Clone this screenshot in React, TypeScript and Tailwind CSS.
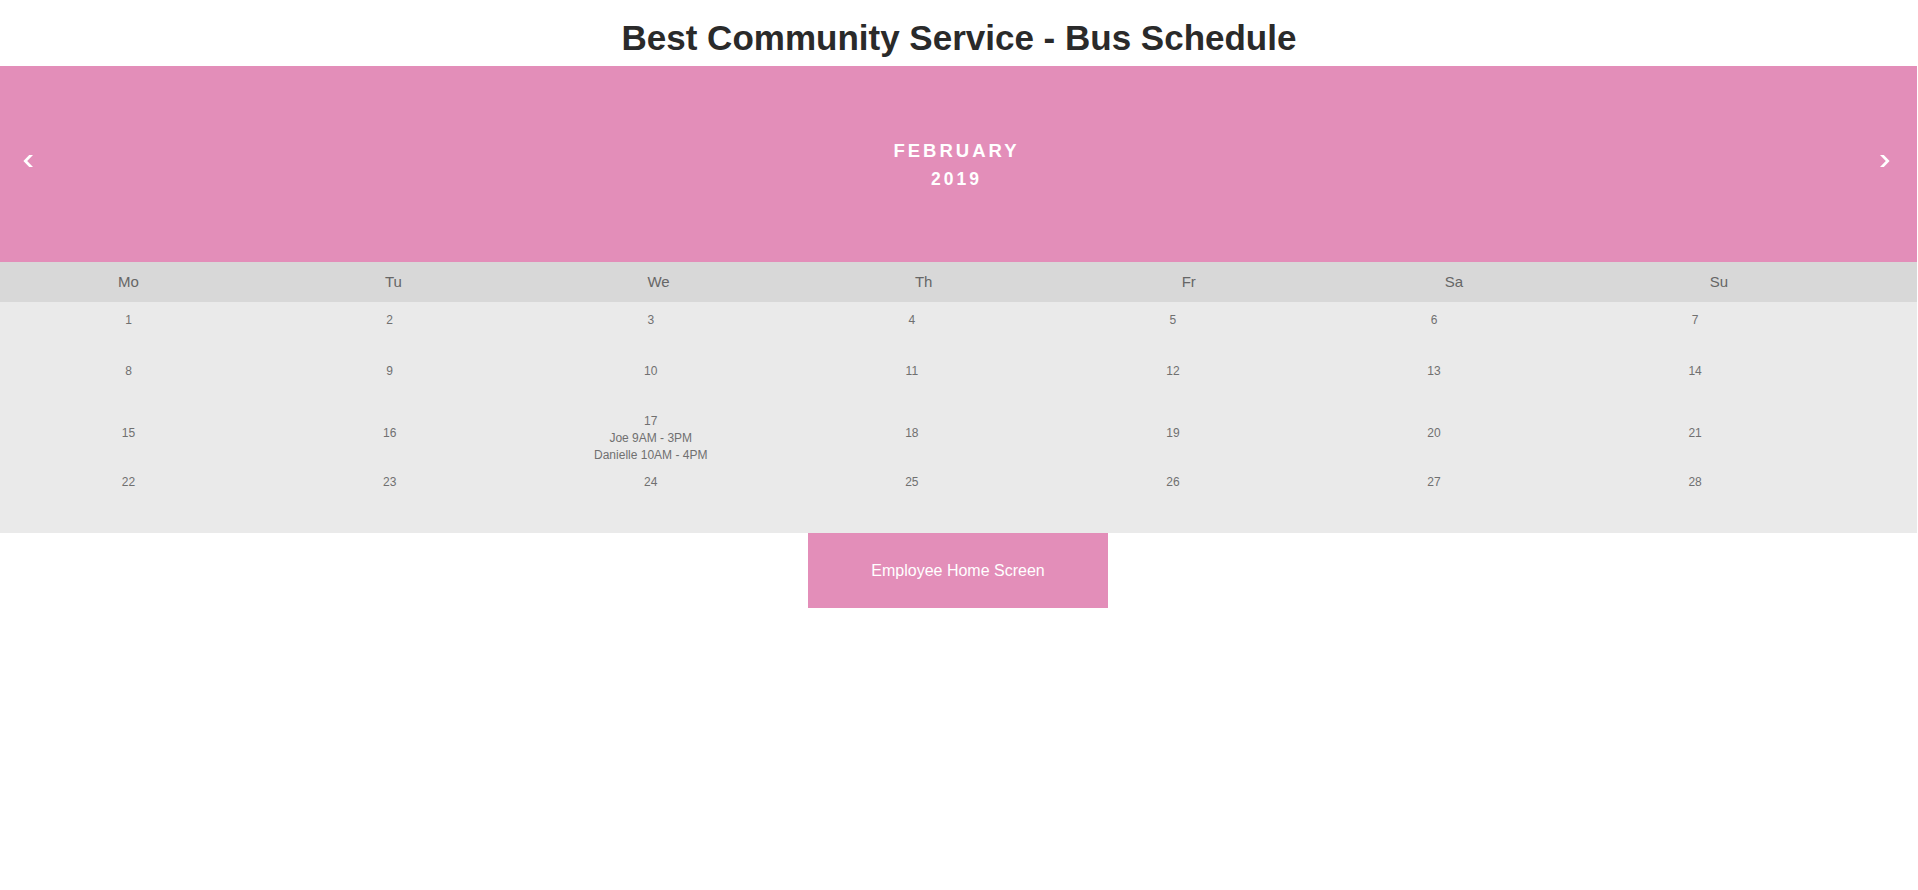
import React from "react";

type Day = { n: number; events?: string[] };

const rows: { days: Day[]; h: string }[] = [
  { days: [1, 2, 3, 4, 5, 6, 7].map((n) => ({ n })), h: "h-[51px]" },
  { days: [8, 9, 10, 11, 12, 13, 14].map((n) => ({ n })), h: "h-[50px]" },
  {
    days: [15, 16, 17, 18, 19, 20, 21].map((n) =>
      n === 17 ? { n, events: ["Joe 9AM - 3PM", "Danielle 10AM - 4PM"] } : { n }
    ),
    h: "h-[61px]",
  },
  { days: [22, 23, 24, 25, 26, 27, 28].map((n) => ({ n })), h: "h-[59px]" },
];

const weekdays = ["Mo", "Tu", "We", "Th", "Fr", "Sa", "Su"];

function Chevron({ dir }: { dir: "left" | "right" }) {
  return (
    <svg
      width="10"
      height="12"
      viewBox="0 0 10 12"
      className={dir === "left" ? "mt-[19px] justify-self-start" : "mt-[19px] justify-self-end"}
    >
      {dir === "left" ? (
        <polygon points="6.2,0 10,0 4.2,6 10,12 6.2,12 0.4,6" fill="#ffffff" />
      ) : (
        <polygon points="3.8,0 0,0 5.8,6 0,12 3.8,12 9.6,6" fill="#ffffff" />
      )}
    </svg>
  );
}

export default function App() {
  return (
    <div className="min-h-screen bg-white font-['Liberation_Sans',Arial,sans-serif]">
      <h1 className="h-[66px] pt-[18px] text-center text-[35px] font-bold leading-[40px] text-[#2a2a2a]">
        Best Community Service - Bus Schedule
      </h1>

      <div className="w-[calc(100%-1px)]">
        {/* Month header */}
        <div className="grid grid-cols-[1fr_auto_1fr] items-start bg-[#e38eb9] pl-[23px] pr-[27px] pt-[70px] pb-[68px]">
          <Chevron dir="left" />
          <div className="text-center font-bold text-white uppercase tracking-[3px] leading-[29px]">
            <div className="text-[18.5px]">February</div>
            <div className="text-[17.5px]">2019</div>
          </div>
          <Chevron dir="right" />
        </div>

        {/* Weekdays */}
        <div className="flex h-[40px] items-center gap-[4.4px] bg-[#d8d8d8] pt-px">
          {weekdays.map((d) => (
            <div key={d} className="w-[13.6%] shrink-0 pr-1 text-center text-[15px] text-[#666666]">
              {d}
            </div>
          ))}
        </div>

        {/* Days */}
        <div className="bg-[#eaeaea] pt-[10px] text-[12px] leading-[17px] text-[#707070]">
          {rows.map((row, i) => (
            <div key={i} className={`flex items-start ${row.h}`}>
              {row.days.map((day) => {
                const tall = row.days.some((x) => x.events);
                return (
                  <div
                    key={day.n}
                    className={`w-[13.62%] shrink-0 pr-1 text-center ${
                      tall && !day.events ? "mt-3" : ""
                    }`}
                  >
                    <div>{day.n}</div>
                    {day.events?.map((e) => (
                      <div key={e}>{e}</div>
                    ))}
                  </div>
                );
              })}
            </div>
          ))}
        </div>
      </div>

      <div className="flex justify-center">
        <button className="mr-[2px] flex h-[75px] w-[300px] items-center justify-center bg-[#e38eb9] text-[16px] text-white">
          Employee Home Screen
        </button>
      </div>
    </div>
  );
}
